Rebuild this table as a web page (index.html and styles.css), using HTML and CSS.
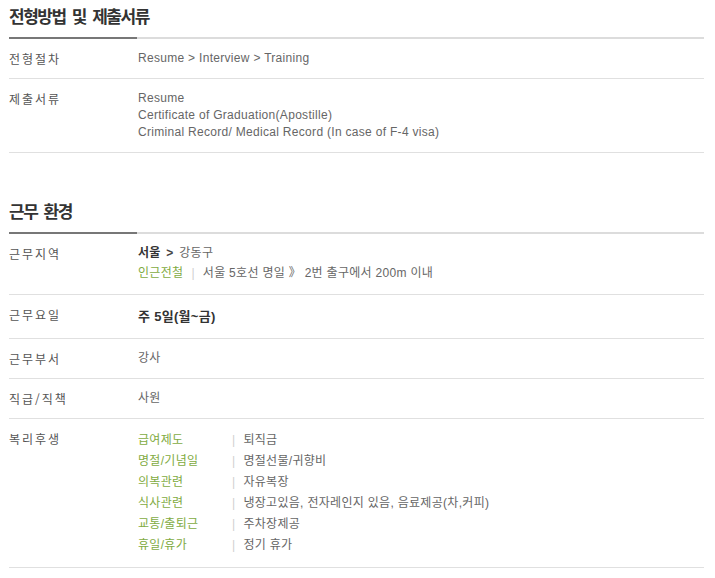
FILE: index.html
```html
<!DOCTYPE html>
<html lang="ko">
<head>
<meta charset="utf-8">
<title>전형방법 및 제출서류</title>
<link rel="stylesheet" href="styles.css">
</head>
<body>
<div class="wrap">
  <section class="section">
    <h2 class="sec-title">전형방법 및 제출서류</h2>
    <div class="row">
      <div class="label">전형절차</div>
      <div class="value">Resume &gt; Interview &gt; Training</div>
    </div>
    <div class="row">
      <div class="label">제출서류</div>
      <div class="value">Resume<br>Certificate of Graduation(Apostille)<br>Criminal Record/ Medical Record (In case of F-4 visa)</div>
    </div>
  </section>

  <section class="section section-2">
    <h2 class="sec-title">근무 환경</h2>
    <div class="row row-area">
      <div class="label">근무지역</div>
      <div class="value">
        <div class="addr"><strong class="strong">서울</strong> <span class="arrow">&gt;</span> 강동구</div>
        <div class="subway"><span class="green">인근전철</span><span class="sep">|</span>서울 5호선 명일 》 2번 출구에서 200m 이내</div>
      </div>
    </div>
    <div class="row row-days">
      <div class="label">근무요일</div>
      <div class="value days">주 5일(월~금)</div>
    </div>
    <div class="row">
      <div class="label">근무부서</div>
      <div class="value">강사</div>
    </div>
    <div class="row">
      <div class="label">직급/직책</div>
      <div class="value">사원</div>
    </div>
    <div class="row">
      <div class="label">복리후생</div>
      <div class="value">
        <div class="benefits">
          <span class="green">급여제도</span><span class="sep">|</span><span>퇴직금</span>
          <span class="green">명절/기념일</span><span class="sep">|</span><span>명절선물/귀향비</span>
          <span class="green">의복관련</span><span class="sep">|</span><span>자유복장</span>
          <span class="green">식사관련</span><span class="sep">|</span><span>냉장고있음, 전자레인지 있음, 음료제공(차,커피)</span>
          <span class="green">교통/출퇴근</span><span class="sep">|</span><span>주차장제공</span>
          <span class="green">휴일/휴가</span><span class="sep">|</span><span>정기 휴가</span>
        </div>
      </div>
    </div>
  </section>
</div>
</body>
</html>
```

FILE: styles.css
```css
html, body {
  margin: 0;
  padding: 0;
  background: #fff;
}

body {
  font-family: "Liberation Sans", "Noto Sans CJK KR", sans-serif;
  font-size: 12px;
  color: #666;
}

.wrap {
  width: 695px;
  padding: 0 11px 0 9px;
}

.section-2 {
  margin-top: 48px;
}

.sec-title {
  margin: 0;
  padding-top: 6px;
  font-family: "Noto Sans CJK KR", sans-serif;
  font-size: 17px;
  line-height: 20px;
  font-weight: 700;
  letter-spacing: -1.5px;
  word-spacing: 3px;
  color: #333;
}

.section-2 .sec-title {
  padding-top: 0;
}

.sec-title::after {
  content: "";
  display: block;
  height: 2px;
  margin-top: 11px;
  background: linear-gradient(to right, #777 0, #777 128px, #dcdcdc 128px, #dcdcdc 100%);
}

.row {
  display: grid;
  grid-template-columns: 129px 1fr;
  padding: 11px 0;
  border-bottom: 1px solid #e0e0e0;
  line-height: 17px;
}

.label {
  font-family: "Noto Sans CJK KR", sans-serif;
  color: #555;
  letter-spacing: 2px;
}

.value {
  letter-spacing: 0.3px;
  color: #666;
}

.strong {
  color: #333;
  font-weight: 700;
}

.arrow {
  color: #444;
  font-weight: 700;
  margin: 0 2px;
}

.subway {
  line-height: 20px;
  margin-top: 1px;
}

.green {
  color: #7fab42;
}

.sep {
  color: #d0d0d0;
  margin: 0 8px;
}

.days {
  font-size: 13px;
  font-weight: 700;
  color: #333;
  line-height: 21px;
}

.benefits {
  display: grid;
  grid-template-columns: 94px auto 1fr;
  line-height: 21px;
}

.benefits .sep {
  margin: 0 8px 0 0;
}
```
